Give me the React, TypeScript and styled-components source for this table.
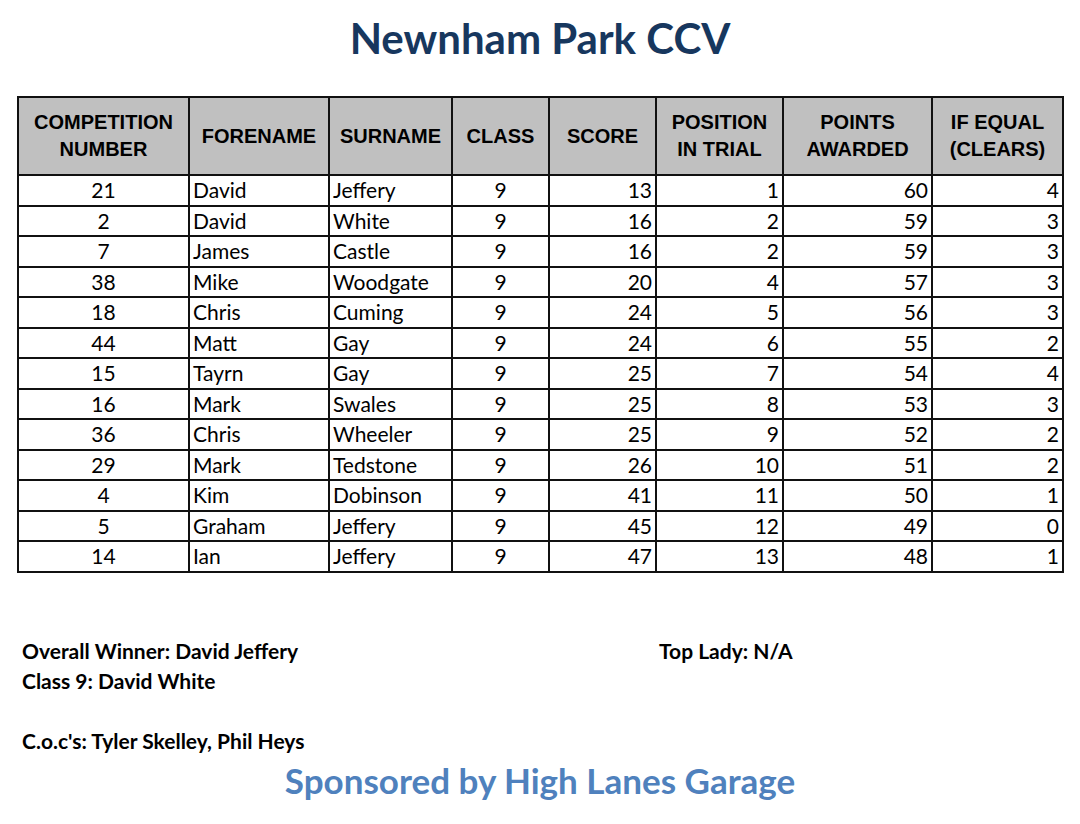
import React from 'react';
import styled, { createGlobalStyle } from 'styled-components';

const GlobalStyle = createGlobalStyle`
    html, body {
        margin: 0;
        padding: 0;
        background: #ffffff;
    }
    body {
        font-family: Lato, 'Open Sans', sans-serif;
        color: #000;
    }
`;

const Page = styled.div`
    width: 1080px;
    height: 824px;
    box-sizing: border-box;
    padding-top: 14px;
    display: flex;
    flex-direction: column;
    align-items: center;
`;

const Title = styled.h1`
    margin: 0;
    height: 48px;
    line-height: 48px;
    font-family: Lato, sans-serif;
    font-weight: 700;
    font-size: 42px;
    color: #17375e;
    text-align: center;
`;

const ResultsTable = styled.table`
    margin-top: 34px;
    margin-left: 1px;
    border-collapse: collapse;
    table-layout: fixed;
    width: 1045px;
    border: 2px solid #111;
`;

const HeadCell = styled.th`
    height: 76px;
    padding: 0 4px;
    background: #c0c0c0;
    border: 2px solid #111;
    font-family: 'Liberation Sans', Arial, sans-serif;
    font-weight: 700;
    font-size: 20px;
    line-height: 27px;
    text-align: center;
    vertical-align: middle;
`;

const Row = styled.tr`
    height: 30.5px;
`;

const Cell = styled.td<{ $align: 'left' | 'center' | 'right' }>`
    padding: 0 3px;
    border: 2px solid #111;
    font-family: Lato, sans-serif;
    font-size: 21px;
    line-height: 26px;
    text-align: ${(p) => p.$align};
    white-space: nowrap;
`;

const Footer = styled.div`
    margin-top: 63px;
    width: 1080px;
    box-sizing: border-box;
    padding-left: 22px;
    display: grid;
    grid-template-columns: 637px 1fr;
    grid-auto-rows: 30px;
    font-family: Lato, sans-serif;
    font-weight: 700;
    font-size: 21px;
`;

const Line = styled.div<{ $col?: number }>`
    grid-column: ${(p) => p.$col ?? 1};
    line-height: 30px;
    white-space: nowrap;
`;

const Sponsor = styled.div`
    margin-top: 2px;
    height: 44px;
    line-height: 44px;
    font-family: Lato, sans-serif;
    font-weight: 700;
    font-size: 35px;
    color: #4f81bd;
    text-align: center;
`;

type Align = 'left' | 'center' | 'right';

const columns: { title: React.ReactNode; width: number; align: Align }[] = [
    { title: <>COMPETITION<br />NUMBER</>, width: 171, align: 'center' },
    { title: 'FORENAME', width: 140, align: 'left' },
    { title: 'SURNAME', width: 123, align: 'left' },
    { title: 'CLASS', width: 97, align: 'center' },
    { title: 'SCORE', width: 107, align: 'right' },
    { title: <>POSITION<br />IN TRIAL</>, width: 127, align: 'right' },
    { title: <>POINTS<br />AWARDED</>, width: 149, align: 'right' },
    { title: <>IF EQUAL<br />(CLEARS)</>, width: 131, align: 'right' },
];

const results: (string | number)[][] = [
    [21, 'David', 'Jeffery', 9, 13, 1, 60, 4],
    [2, 'David', 'White', 9, 16, 2, 59, 3],
    [7, 'James', 'Castle', 9, 16, 2, 59, 3],
    [38, 'Mike', 'Woodgate', 9, 20, 4, 57, 3],
    [18, 'Chris', 'Cuming', 9, 24, 5, 56, 3],
    [44, 'Matt', 'Gay', 9, 24, 6, 55, 2],
    [15, 'Tayrn', 'Gay', 9, 25, 7, 54, 4],
    [16, 'Mark', 'Swales', 9, 25, 8, 53, 3],
    [36, 'Chris', 'Wheeler', 9, 25, 9, 52, 2],
    [29, 'Mark', 'Tedstone', 9, 26, 10, 51, 2],
    [4, 'Kim', 'Dobinson', 9, 41, 11, 50, 1],
    [5, 'Graham', 'Jeffery', 9, 45, 12, 49, 0],
    [14, 'Ian', 'Jeffery', 9, 47, 13, 48, 1],
];

export default function App() {
    return (
        <>
            <GlobalStyle />
            <Page>
                <Title>Newnham Park CCV</Title>
                <ResultsTable>
                    <colgroup>
                        {columns.map((c, i) => (
                            <col key={i} style={{ width: c.width }} />
                        ))}
                    </colgroup>
                    <thead>
                        <tr>
                            {columns.map((c, i) => (
                                <HeadCell key={i}>{c.title}</HeadCell>
                            ))}
                        </tr>
                    </thead>
                    <tbody>
                        {results.map((row, r) => (
                            <Row key={r}>
                                {row.map((value, i) => (
                                    <Cell key={i} $align={columns[i].align}>
                                        {value}
                                    </Cell>
                                ))}
                            </Row>
                        ))}
                    </tbody>
                </ResultsTable>
                <Footer>
                    <Line>Overall Winner: David Jeffery</Line>
                    <Line $col={2}>Top Lady: N/A</Line>
                    <Line>Class 9: David White</Line>
                    <Line />
                    <Line>C.o.c's: Tyler Skelley, Phil Heys</Line>
                </Footer>
                <Sponsor>Sponsored by High Lanes Garage</Sponsor>
            </Page>
        </>
    );
}
